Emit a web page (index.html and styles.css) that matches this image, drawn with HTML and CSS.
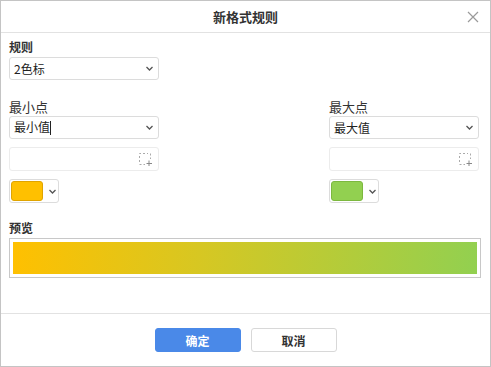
FILE: index.html
```html
<!DOCTYPE html>
<html lang="zh">
  <head>
    <meta charset="UTF-8" />
    <title>新格式规则</title>
    <link rel="stylesheet" href="styles.css">
  </head>
  <body>
    <div class="dialog">
      <div class="dlg-head">
        <span class="dlg-title">新格式规则</span>
        <svg class="dlg-close" width="12" height="12" viewBox="0 0 12 12">
          <path d="M1 1 L11 11 M11 1 L1 11" stroke="#9a9a9a" stroke-width="1.2" fill="none" />
        </svg>
      </div>

      <div class="dlg-body">
        <div class="sec-label">规则</div>
        <div class="select">
          <span>2色标</span>
          <svg class="chev" width="7" height="5" viewBox="0 0 7 5"><path d="M0.5 1 L3.5 4 L6.5 1" stroke="#555" stroke-width="1.3" fill="none" /></svg>
        </div>

        <div class="cols">
          <div class="col">
            <div class="pt-label">最小点</div>
            <div class="select">
              <span>最小值<i class="caret"></i></span>
              <svg class="chev" width="7" height="5" viewBox="0 0 7 5"><path d="M0.5 1 L3.5 4 L6.5 1" stroke="#555" stroke-width="1.3" fill="none" /></svg>
            </div>
            <div class="ref-input">
              <svg width="13" height="13" viewBox="0 0 13 13">
                <path d="M0.5 9 V0.5 H9" stroke="#aaa" stroke-dasharray="2 2" fill="none" />
                <path d="M11.5 0.5 V6 M0.5 11.5 H6" stroke="#aaa" stroke-dasharray="2 2" fill="none" />
                <path d="M10 7.5 V13 M7.5 10.5 H13" stroke="#888" fill="none" />
              </svg>
            </div>
            <div class="color-btn">
              <span class="swatch swatch-min"></span>
              <svg class="chev" width="7" height="5" viewBox="0 0 7 5"><path d="M0.5 1 L3.5 4 L6.5 1" stroke="#555" stroke-width="1.3" fill="none" /></svg>
            </div>
          </div>

          <div class="col">
            <div class="pt-label">最大点</div>
            <div class="select">
              <span>最大值</span>
              <svg class="chev" width="7" height="5" viewBox="0 0 7 5"><path d="M0.5 1 L3.5 4 L6.5 1" stroke="#555" stroke-width="1.3" fill="none" /></svg>
            </div>
            <div class="ref-input">
              <svg width="13" height="13" viewBox="0 0 13 13">
                <path d="M0.5 9 V0.5 H9" stroke="#aaa" stroke-dasharray="2 2" fill="none" />
                <path d="M11.5 0.5 V6 M0.5 11.5 H6" stroke="#aaa" stroke-dasharray="2 2" fill="none" />
                <path d="M10 7.5 V13 M7.5 10.5 H13" stroke="#888" fill="none" />
              </svg>
            </div>
            <div class="color-btn">
              <span class="swatch swatch-max"></span>
              <svg class="chev" width="7" height="5" viewBox="0 0 7 5"><path d="M0.5 1 L3.5 4 L6.5 1" stroke="#555" stroke-width="1.3" fill="none" /></svg>
            </div>
          </div>
        </div>

        <div class="sec-label preview-label">预览</div>
        <div class="preview">
          <div class="preview-bar"></div>
        </div>
      </div>

      <div class="dlg-foot">
        <button class="btn btn-ok">确定</button>
        <button class="btn btn-cancel">取消</button>
      </div>
    </div>
  </body>
</html>
```

FILE: styles.css
```css
* {
  box-sizing: border-box;
}
body {
  margin: 0;
  font-family: "Noto Sans CJK SC", "Liberation Sans", sans-serif;
  font-size: 12px;
  color: #222;
  background: #fff;
}
.dialog {
  width: 491px;
  height: 367px;
  border: 1px solid #c4c4c4;
  display: flex;
  flex-direction: column;
}
.dlg-head {
  height: 32px;
  border-bottom: 1px solid #e2e2e2;
  display: flex;
  align-items: center;
  justify-content: center;
  position: relative;
}
.dlg-title {
  font-size: 13px;
  font-weight: bold;
  color: #333;
}
.dlg-close {
  position: absolute;
  right: 11px;
  top: 10px;
}
.dlg-body {
  flex: 1;
  padding: 6px 11px 0 8px;
}
.sec-label {
  font-weight: bold;
  line-height: 16px;
  height: 16px;
  margin-bottom: 2px;
  color: #333;
}
.select {
  width: 150px;
  height: 23px;
  border: 1px solid #dcdcdc;
  border-radius: 3px;
  display: flex;
  align-items: center;
  justify-content: space-between;
  padding: 0 5px 0 4px;
  line-height: 1;
}
.caret {
  display: inline-block;
  width: 1px;
  height: 14px;
  background: #222;
  vertical-align: -3px;
}
.cols {
  display: flex;
  justify-content: space-between;
  margin-top: 19px;
}
.col {
  width: 150px;
}
.pt-label {
  font-size: 13px;
  line-height: 16px;
  margin-bottom: 1px;
  color: #333;
}
.ref-input {
  margin-top: 8px;
  height: 24px;
  border: 1px solid #ececec;
  border-radius: 3px;
  display: flex;
  align-items: center;
  justify-content: flex-end;
  padding-right: 6px;
}
.color-btn {
  margin-top: 8px;
  width: 50px;
  height: 24px;
  border: 1px solid #dcdcdc;
  border-radius: 3px;
  display: flex;
  align-items: center;
  gap: 6px;
  padding-left: 1px;
}
.swatch {
  width: 32px;
  height: 20px;
  border-radius: 3px;
}
.swatch-min {
  background: #ffc000;
  border: 1px solid #e0a400;
}
.swatch-max {
  background: #92d050;
  border: 1px solid #7cb83e;
}
.preview-label {
  margin-top: 17px;
}
.preview {
  width: 472px;
  height: 40px;
  border: 1px solid #c8c8c8;
  padding: 3px;
}
.preview-bar {
  height: 100%;
  background: linear-gradient(95deg, #ffc000 0%, #d7c722 40%, #92d050 100%);
}
.dlg-foot {
  height: 53px;
  border-top: 1px solid #e2e2e2;
  display: flex;
  justify-content: center;
  align-items: flex-start;
  padding-top: 14px;
  gap: 10px;
}
.btn {
  width: 86px;
  height: 24px;
  border-radius: 3px;
  font-family: inherit;
  font-size: 12px;
  font-weight: bold;
  cursor: pointer;
}
.btn-ok {
  background: #4a89e8;
  border: 1px solid #4a89e8;
  color: #fff;
}
.btn-cancel {
  background: #fff;
  border: 1px solid #d8d8d8;
  color: #333;
}
```
